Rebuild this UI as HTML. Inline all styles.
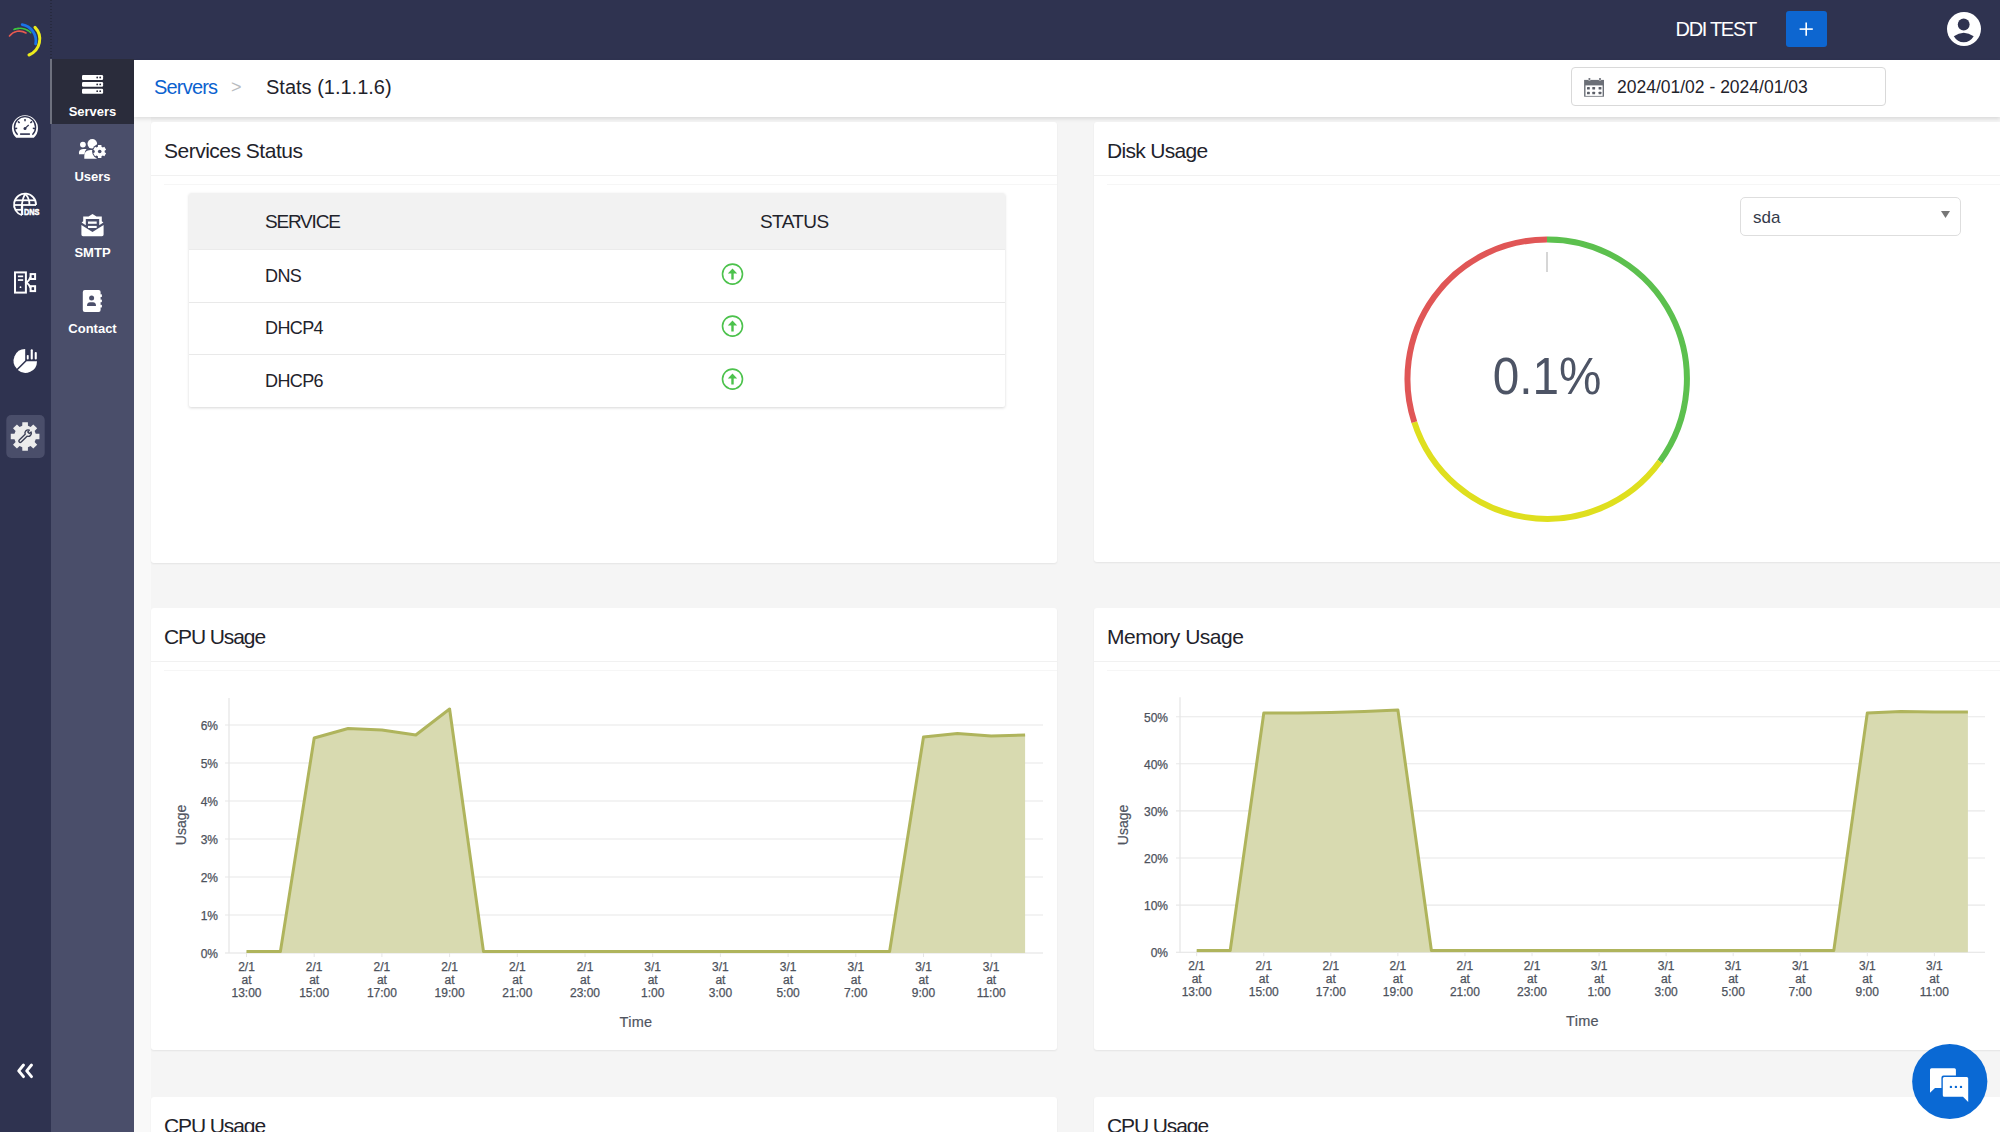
<!DOCTYPE html>
<html><head><meta charset="utf-8">
<style>
*{box-sizing:border-box;margin:0;padding:0}
html,body{width:2000px;height:1132px;overflow:hidden;background:#f9f9f9;font-family:"Liberation Sans",sans-serif;color:#1f232b}
.abs{position:absolute}
#topbar{left:0;top:0;width:2000px;height:60px;background:#2f3350}
#rail{left:0;top:0;width:51px;height:1132px;background:#2f3350}
#side{left:51px;top:60px;width:83px;height:1072px;background:#4a4e6a}
#active{left:51px;top:59px;width:83px;height:65px;background:#2a2c3b}
#activebar{left:50px;top:59px;width:2px;height:65px;background:#6e717e}
.slabel{position:absolute;left:51px;width:83px;text-align:center;color:#fff;font-size:13px;font-weight:700;line-height:15px}
#header{left:134px;top:60px;width:1866px;height:57px;background:#fff;box-shadow:0 2px 4px rgba(0,0,0,.11)}
.card{position:absolute;background:#fff;border-radius:3px;box-shadow:0 1px 2px rgba(0,0,0,.07)}
.ctitle{position:absolute;left:13px;top:16.5px;font-size:21px;color:#1f232b;line-height:24px;letter-spacing:-0.5px;white-space:nowrap}
.csep{position:absolute;left:0;right:0;top:53px;height:1px;background:#f1f1f1}
.csep::after{content:"";position:absolute;left:13px;right:0;top:8.5px;height:1px;background:#f6f6f6}
.th{font-size:19px;color:#1f232b;line-height:22px;letter-spacing:-1.2px}
.td{font-size:18px;color:#1f232b;line-height:21px;letter-spacing:-0.6px}
</style></head>
<body>
<div id="topbar" class="abs"></div>
<div id="rail" class="abs"></div>
<div id="side" class="abs"></div>
<div id="active" class="abs"></div>
<div id="activebar" class="abs"></div>

<div class="slabel" style="top:104px">Servers</div>
<div class="slabel" style="top:169px">Users</div>
<div class="slabel" style="top:245px">SMTP</div>
<div class="slabel" style="top:321px">Contact</div>

<!-- top bar right -->
<div class="abs" style="left:1675.5px;top:18.2px;font-size:20px;color:#fff;letter-spacing:-1.3px;line-height:22px">DDI TEST</div>
<div class="abs" style="left:1786px;top:11px;width:41px;height:36px;background:#0d66d0;border-radius:3px"></div>
<div class="abs" style="left:1947px;top:12px;width:34px;height:34px;border-radius:50%;background:#fff"></div>

<div class="abs" style="left:151px;top:117px;width:1849px;height:1015px;background:#f5f5f5"></div>
<div id="header" class="abs"></div>
<div class="abs" style="left:154px;top:76px;font-size:20px;letter-spacing:-0.8px;color:#0b62cf;line-height:22px">Servers</div>
<div class="abs" style="left:231px;top:76.5px;font-size:18px;color:#b9bcc0;line-height:20px">&gt;</div>
<div class="abs" style="left:266px;top:76px;font-size:20px;color:#1f232b;line-height:22px">Stats (1.1.1.6)</div>

<div class="abs" style="left:1571px;top:67px;width:315px;height:39px;border:1px solid #d9d9d9;border-radius:4px;background:#fff"></div>
<div class="abs" style="left:1617px;top:77px;font-size:17.5px;color:#1f232b;line-height:20px">2024/01/02 - 2024/01/03</div>

<!-- cards -->
<div class="card" style="left:151px;top:122px;width:906px;height:441px"><div class="ctitle">Services Status</div><div class="csep"></div></div>
<div class="card" style="left:1094px;top:122px;width:910px;height:440px"><div class="ctitle" style="letter-spacing:-0.7px">Disk Usage</div><div class="csep"></div></div>
<div class="card" style="left:151px;top:608px;width:906px;height:442px"><div class="ctitle" style="letter-spacing:-1.1px">CPU Usage</div><div class="csep"></div></div>
<div class="card" style="left:1094px;top:608px;width:910px;height:442px"><div class="ctitle">Memory Usage</div><div class="csep"></div></div>
<div class="card" style="left:151px;top:1097px;width:906px;height:441px"><div class="ctitle" style="letter-spacing:-1.1px">CPU Usage</div><div class="csep"></div></div>
<div class="card" style="left:1094px;top:1097px;width:910px;height:441px"><div class="ctitle" style="letter-spacing:-1.1px">CPU Usage</div><div class="csep"></div></div>

<!-- services table -->
<div class="abs" style="left:189px;top:193px;width:816px;height:214px;background:#fff;box-shadow:0 1px 3px rgba(0,0,0,.16);border-radius:2px"></div>
<div class="abs" style="left:189px;top:193px;width:816px;height:57px;background:#f2f2f2;border-bottom:1px solid #ebebeb;border-radius:2px 2px 0 0"></div>
<div class="abs" style="left:189px;top:302px;width:816px;height:1px;background:#e9e9e9"></div>
<div class="abs" style="left:189px;top:354px;width:816px;height:1px;background:#e9e9e9"></div>
<div class="abs th" style="left:265px;top:211px">SERVICE</div>
<div class="abs th" style="left:760px;top:211px;letter-spacing:-0.6px">STATUS</div>
<div class="abs td" style="left:265px;top:266px">DNS</div>
<div class="abs td" style="left:265px;top:318px">DHCP4</div>
<div class="abs td" style="left:265px;top:371px">DHCP6</div>

<!-- dropdown -->
<div class="abs" style="left:1740px;top:197px;width:221px;height:39px;border:1px solid #dedede;border-radius:5px;background:#fff"></div>
<div class="abs" style="left:1753px;top:207.5px;font-size:17px;color:#343a4a;line-height:20px">sda</div>

<!-- gauge value -->
<div class="abs" style="left:1447px;top:348px;width:200px;text-align:center;font-size:51px;color:#4d5465;line-height:58px;transform:scaleX(0.935);transform-origin:100.4px 0">0.1%</div>

<svg class="abs" style="left:0;top:0" width="2000" height="1132" viewBox="0 0 2000 1132">
<style>
.yl{font-family:"Liberation Sans",sans-serif;font-size:12px;fill:#4d525c;stroke:#4d525c;stroke-width:0.25px}
.xl{font-family:"Liberation Sans",sans-serif;font-size:12px;fill:#4d525c;stroke:#4d525c;stroke-width:0.25px}
.ul{font-family:"Liberation Sans",sans-serif;font-size:14px;fill:#50555f;stroke:#50555f;stroke-width:0.2px}
.tl{font-family:"Liberation Sans",sans-serif;font-size:14.5px;fill:#50555f;stroke:#50555f;stroke-width:0.2px;letter-spacing:0.3px}
</style>
<line x1="225" y1="953" x2="1043" y2="953" stroke="#e2e2e2" stroke-width="1.1"/>
<text x="218" y="957.8" text-anchor="end" class="yl">0%</text>
<line x1="225" y1="915" x2="1043" y2="915" stroke="#e8e8e8" stroke-width="1.1"/>
<text x="218" y="919.8" text-anchor="end" class="yl">1%</text>
<line x1="225" y1="877" x2="1043" y2="877" stroke="#e8e8e8" stroke-width="1.1"/>
<text x="218" y="881.8" text-anchor="end" class="yl">2%</text>
<line x1="225" y1="839" x2="1043" y2="839" stroke="#e8e8e8" stroke-width="1.1"/>
<text x="218" y="843.8" text-anchor="end" class="yl">3%</text>
<line x1="225" y1="801" x2="1043" y2="801" stroke="#e8e8e8" stroke-width="1.1"/>
<text x="218" y="805.8" text-anchor="end" class="yl">4%</text>
<line x1="225" y1="763" x2="1043" y2="763" stroke="#e8e8e8" stroke-width="1.1"/>
<text x="218" y="767.8" text-anchor="end" class="yl">5%</text>
<line x1="225" y1="725" x2="1043" y2="725" stroke="#e8e8e8" stroke-width="1.1"/>
<text x="218" y="729.8" text-anchor="end" class="yl">6%</text>
<line x1="229" y1="698" x2="229" y2="953" stroke="#e6e6e6" stroke-width="1.3"/>
<path d="M246.5,951.6 L280.4,951.6 L314.2,738.0 L348.1,728.5 L381.9,730.0 L415.8,735.0 L449.6,709.0 L483.5,951.6 L517.3,951.6 L551.2,951.6 L585.0,951.6 L618.9,951.6 L652.7,951.6 L686.5,951.6 L720.4,951.6 L754.2,951.6 L788.1,951.6 L822.0,951.6 L855.8,951.6 L889.6,951.6 L923.5,737.0 L957.4,733.5 L991.2,736.0 L1025.1,735.0 L1025.1,953 L246.5,953 Z" fill="#d8dab0"/>
<path d="M246.5,951.6 L280.4,951.6 L314.2,738.0 L348.1,728.5 L381.9,730.0 L415.8,735.0 L449.6,709.0 L483.5,951.6 L517.3,951.6 L551.2,951.6 L585.0,951.6 L618.9,951.6 L652.7,951.6 L686.5,951.6 L720.4,951.6 L754.2,951.6 L788.1,951.6 L822.0,951.6 L855.8,951.6 L889.6,951.6 L923.5,737.0 L957.4,733.5 L991.2,736.0 L1025.1,735.0" fill="none" stroke="#afb45c" stroke-width="3" stroke-linejoin="round"/>
<line x1="246.5" y1="953" x2="246.5" y2="957" stroke="#e6e6e6" stroke-width="1"/>
<text x="246.5" y="970.9" text-anchor="middle" class="xl"><tspan x="246.5" dy="0">2/1</tspan><tspan x="246.5" dy="12.8">at</tspan><tspan x="246.5" dy="12.8">13:00</tspan></text>
<line x1="314.2" y1="953" x2="314.2" y2="957" stroke="#e6e6e6" stroke-width="1"/>
<text x="314.2" y="970.9" text-anchor="middle" class="xl"><tspan x="314.2" dy="0">2/1</tspan><tspan x="314.2" dy="12.8">at</tspan><tspan x="314.2" dy="12.8">15:00</tspan></text>
<line x1="381.9" y1="953" x2="381.9" y2="957" stroke="#e6e6e6" stroke-width="1"/>
<text x="381.9" y="970.9" text-anchor="middle" class="xl"><tspan x="381.9" dy="0">2/1</tspan><tspan x="381.9" dy="12.8">at</tspan><tspan x="381.9" dy="12.8">17:00</tspan></text>
<line x1="449.6" y1="953" x2="449.6" y2="957" stroke="#e6e6e6" stroke-width="1"/>
<text x="449.6" y="970.9" text-anchor="middle" class="xl"><tspan x="449.6" dy="0">2/1</tspan><tspan x="449.6" dy="12.8">at</tspan><tspan x="449.6" dy="12.8">19:00</tspan></text>
<line x1="517.3" y1="953" x2="517.3" y2="957" stroke="#e6e6e6" stroke-width="1"/>
<text x="517.3" y="970.9" text-anchor="middle" class="xl"><tspan x="517.3" dy="0">2/1</tspan><tspan x="517.3" dy="12.8">at</tspan><tspan x="517.3" dy="12.8">21:00</tspan></text>
<line x1="585.0" y1="953" x2="585.0" y2="957" stroke="#e6e6e6" stroke-width="1"/>
<text x="585.0" y="970.9" text-anchor="middle" class="xl"><tspan x="585.0" dy="0">2/1</tspan><tspan x="585.0" dy="12.8">at</tspan><tspan x="585.0" dy="12.8">23:00</tspan></text>
<line x1="652.7" y1="953" x2="652.7" y2="957" stroke="#e6e6e6" stroke-width="1"/>
<text x="652.7" y="970.9" text-anchor="middle" class="xl"><tspan x="652.7" dy="0">3/1</tspan><tspan x="652.7" dy="12.8">at</tspan><tspan x="652.7" dy="12.8">1:00</tspan></text>
<line x1="720.4000000000001" y1="953" x2="720.4000000000001" y2="957" stroke="#e6e6e6" stroke-width="1"/>
<text x="720.4000000000001" y="970.9" text-anchor="middle" class="xl"><tspan x="720.4000000000001" dy="0">3/1</tspan><tspan x="720.4000000000001" dy="12.8">at</tspan><tspan x="720.4000000000001" dy="12.8">3:00</tspan></text>
<line x1="788.1" y1="953" x2="788.1" y2="957" stroke="#e6e6e6" stroke-width="1"/>
<text x="788.1" y="970.9" text-anchor="middle" class="xl"><tspan x="788.1" dy="0">3/1</tspan><tspan x="788.1" dy="12.8">at</tspan><tspan x="788.1" dy="12.8">5:00</tspan></text>
<line x1="855.8000000000001" y1="953" x2="855.8000000000001" y2="957" stroke="#e6e6e6" stroke-width="1"/>
<text x="855.8000000000001" y="970.9" text-anchor="middle" class="xl"><tspan x="855.8000000000001" dy="0">3/1</tspan><tspan x="855.8000000000001" dy="12.8">at</tspan><tspan x="855.8000000000001" dy="12.8">7:00</tspan></text>
<line x1="923.5" y1="953" x2="923.5" y2="957" stroke="#e6e6e6" stroke-width="1"/>
<text x="923.5" y="970.9" text-anchor="middle" class="xl"><tspan x="923.5" dy="0">3/1</tspan><tspan x="923.5" dy="12.8">at</tspan><tspan x="923.5" dy="12.8">9:00</tspan></text>
<line x1="991.2" y1="953" x2="991.2" y2="957" stroke="#e6e6e6" stroke-width="1"/>
<text x="991.2" y="970.9" text-anchor="middle" class="xl"><tspan x="991.2" dy="0">3/1</tspan><tspan x="991.2" dy="12.8">at</tspan><tspan x="991.2" dy="12.8">11:00</tspan></text>
<text x="185.5" y="825" transform="rotate(-90 185.5 825)" text-anchor="middle" class="ul">Usage</text>
<text x="636" y="1027.3" text-anchor="middle" class="tl">Time</text>
<line x1="1176" y1="952.2" x2="1985" y2="952.2" stroke="#e2e2e2" stroke-width="1.1"/>
<text x="1168" y="957.0" text-anchor="end" class="yl">0%</text>
<line x1="1176" y1="905.1" x2="1985" y2="905.1" stroke="#e8e8e8" stroke-width="1.1"/>
<text x="1168" y="909.9" text-anchor="end" class="yl">10%</text>
<line x1="1176" y1="858.0" x2="1985" y2="858.0" stroke="#e8e8e8" stroke-width="1.1"/>
<text x="1168" y="862.8" text-anchor="end" class="yl">20%</text>
<line x1="1176" y1="810.9000000000001" x2="1985" y2="810.9000000000001" stroke="#e8e8e8" stroke-width="1.1"/>
<text x="1168" y="815.7" text-anchor="end" class="yl">30%</text>
<line x1="1176" y1="763.8000000000001" x2="1985" y2="763.8000000000001" stroke="#e8e8e8" stroke-width="1.1"/>
<text x="1168" y="768.6" text-anchor="end" class="yl">40%</text>
<line x1="1176" y1="716.7" x2="1985" y2="716.7" stroke="#e8e8e8" stroke-width="1.1"/>
<text x="1168" y="721.5" text-anchor="end" class="yl">50%</text>
<line x1="1180" y1="697.2" x2="1180" y2="952.2" stroke="#e6e6e6" stroke-width="1.3"/>
<path d="M1196.7,950.5 L1230.2,950.5 L1263.8,713.0 L1297.3,713.0 L1330.8,712.5 L1364.4,711.5 L1397.9,710.0 L1431.4,950.5 L1464.9,950.5 L1498.5,950.5 L1532.0,950.5 L1565.5,950.5 L1599.1,950.5 L1632.6,950.5 L1666.1,950.5 L1699.7,950.5 L1733.2,950.5 L1766.7,950.5 L1800.2,950.5 L1833.8,950.5 L1867.3,713.0 L1900.8,711.5 L1934.4,712.0 L1967.9,712.0 L1967.9,952.2 L1196.7,952.2 Z" fill="#d8dab0"/>
<path d="M1196.7,950.5 L1230.2,950.5 L1263.8,713.0 L1297.3,713.0 L1330.8,712.5 L1364.4,711.5 L1397.9,710.0 L1431.4,950.5 L1464.9,950.5 L1498.5,950.5 L1532.0,950.5 L1565.5,950.5 L1599.1,950.5 L1632.6,950.5 L1666.1,950.5 L1699.7,950.5 L1733.2,950.5 L1766.7,950.5 L1800.2,950.5 L1833.8,950.5 L1867.3,713.0 L1900.8,711.5 L1934.4,712.0 L1967.9,712.0" fill="none" stroke="#afb45c" stroke-width="3" stroke-linejoin="round"/>
<line x1="1196.7" y1="952.2" x2="1196.7" y2="956.2" stroke="#e6e6e6" stroke-width="1"/>
<text x="1196.7" y="970.4" text-anchor="middle" class="xl"><tspan x="1196.7" dy="0">2/1</tspan><tspan x="1196.7" dy="12.8">at</tspan><tspan x="1196.7" dy="12.8">13:00</tspan></text>
<line x1="1263.76" y1="952.2" x2="1263.76" y2="956.2" stroke="#e6e6e6" stroke-width="1"/>
<text x="1263.76" y="970.4" text-anchor="middle" class="xl"><tspan x="1263.76" dy="0">2/1</tspan><tspan x="1263.76" dy="12.8">at</tspan><tspan x="1263.76" dy="12.8">15:00</tspan></text>
<line x1="1330.8200000000002" y1="952.2" x2="1330.8200000000002" y2="956.2" stroke="#e6e6e6" stroke-width="1"/>
<text x="1330.8200000000002" y="970.4" text-anchor="middle" class="xl"><tspan x="1330.8200000000002" dy="0">2/1</tspan><tspan x="1330.8200000000002" dy="12.8">at</tspan><tspan x="1330.8200000000002" dy="12.8">17:00</tspan></text>
<line x1="1397.88" y1="952.2" x2="1397.88" y2="956.2" stroke="#e6e6e6" stroke-width="1"/>
<text x="1397.88" y="970.4" text-anchor="middle" class="xl"><tspan x="1397.88" dy="0">2/1</tspan><tspan x="1397.88" dy="12.8">at</tspan><tspan x="1397.88" dy="12.8">19:00</tspan></text>
<line x1="1464.94" y1="952.2" x2="1464.94" y2="956.2" stroke="#e6e6e6" stroke-width="1"/>
<text x="1464.94" y="970.4" text-anchor="middle" class="xl"><tspan x="1464.94" dy="0">2/1</tspan><tspan x="1464.94" dy="12.8">at</tspan><tspan x="1464.94" dy="12.8">21:00</tspan></text>
<line x1="1532.0" y1="952.2" x2="1532.0" y2="956.2" stroke="#e6e6e6" stroke-width="1"/>
<text x="1532.0" y="970.4" text-anchor="middle" class="xl"><tspan x="1532.0" dy="0">2/1</tspan><tspan x="1532.0" dy="12.8">at</tspan><tspan x="1532.0" dy="12.8">23:00</tspan></text>
<line x1="1599.06" y1="952.2" x2="1599.06" y2="956.2" stroke="#e6e6e6" stroke-width="1"/>
<text x="1599.06" y="970.4" text-anchor="middle" class="xl"><tspan x="1599.06" dy="0">3/1</tspan><tspan x="1599.06" dy="12.8">at</tspan><tspan x="1599.06" dy="12.8">1:00</tspan></text>
<line x1="1666.1200000000001" y1="952.2" x2="1666.1200000000001" y2="956.2" stroke="#e6e6e6" stroke-width="1"/>
<text x="1666.1200000000001" y="970.4" text-anchor="middle" class="xl"><tspan x="1666.1200000000001" dy="0">3/1</tspan><tspan x="1666.1200000000001" dy="12.8">at</tspan><tspan x="1666.1200000000001" dy="12.8">3:00</tspan></text>
<line x1="1733.18" y1="952.2" x2="1733.18" y2="956.2" stroke="#e6e6e6" stroke-width="1"/>
<text x="1733.18" y="970.4" text-anchor="middle" class="xl"><tspan x="1733.18" dy="0">3/1</tspan><tspan x="1733.18" dy="12.8">at</tspan><tspan x="1733.18" dy="12.8">5:00</tspan></text>
<line x1="1800.24" y1="952.2" x2="1800.24" y2="956.2" stroke="#e6e6e6" stroke-width="1"/>
<text x="1800.24" y="970.4" text-anchor="middle" class="xl"><tspan x="1800.24" dy="0">3/1</tspan><tspan x="1800.24" dy="12.8">at</tspan><tspan x="1800.24" dy="12.8">7:00</tspan></text>
<line x1="1867.3000000000002" y1="952.2" x2="1867.3000000000002" y2="956.2" stroke="#e6e6e6" stroke-width="1"/>
<text x="1867.3000000000002" y="970.4" text-anchor="middle" class="xl"><tspan x="1867.3000000000002" dy="0">3/1</tspan><tspan x="1867.3000000000002" dy="12.8">at</tspan><tspan x="1867.3000000000002" dy="12.8">9:00</tspan></text>
<line x1="1934.3600000000001" y1="952.2" x2="1934.3600000000001" y2="956.2" stroke="#e6e6e6" stroke-width="1"/>
<text x="1934.3600000000001" y="970.4" text-anchor="middle" class="xl"><tspan x="1934.3600000000001" dy="0">3/1</tspan><tspan x="1934.3600000000001" dy="12.8">at</tspan><tspan x="1934.3600000000001" dy="12.8">11:00</tspan></text>
<text x="1127.5" y="825" transform="rotate(-90 1127.5 825)" text-anchor="middle" class="ul">Usage</text>
<text x="1582.5" y="1026" text-anchor="middle" class="tl">Time</text>
<!-- gauge -->
<g fill="none" stroke-width="6">
<path d="M1547,239.5 A139.5,139.5 0 0 1 1659.9,461.5" stroke="#5cc04e"/>
<path d="M1659.9,461.5 A139.5,139.5 0 0 1 1414.3,422.1" stroke="#dfdf1e"/>
<path d="M1414.3,422.1 A139.5,139.5 0 0 1 1547,239.5" stroke="#e05656"/>
</g>
<line x1="1547" y1="252" x2="1547" y2="272" stroke="#c8c8c8" stroke-width="1.5"/>
<!-- dropdown arrow -->
<path d="M1941,211 L1950,211 L1945.5,218 Z" fill="#777"/>
<!-- status icons -->
<g id="st">
<circle cx="732.5" cy="274.1" r="10" fill="none" stroke="#4cc24c" stroke-width="1.6"/>
<path d="M732.5,268.6 L737.2,273.6 L733.7,273.6 L733.7,279.6 L731.3,279.6 L731.3,273.6 L727.8,273.6 Z" fill="#4cc24c"/>
</g>
<use href="#st" y="52"/>
<use href="#st" y="105"/>

<!-- ===== left rail icons ===== -->
<!-- logo -->
<g fill="none" stroke-linecap="round">
<path d="M9.5,36 A12.5,12.5 0 0 1 26,33" stroke="#e85a50" stroke-width="1.6"/>
<path d="M14,29.5 A15.5,15.5 0 0 1 31.5,33.5" stroke="#3ec83e" stroke-width="1.6" stroke-dasharray="2 1.2"/>
<path d="M22.2,24.6 A16.5,16.5 0 0 1 35.6,44" stroke="#1a74e8" stroke-width="2.8"/>
<path d="M35,27.4 A17,17 0 0 1 29,55" stroke="#ecec1c" stroke-width="3"/>
</g>
<!-- dotted separator near rail -->
<line x1="51" y1="0" x2="51" y2="59" stroke="#20222f" stroke-width="1" stroke-dasharray="1 2"/>
<!-- gauge -->
<path d="M16.2,137.8 L33.8,137.8 A13,13 0 1 0 16.2,137.8 Z" fill="#fff"/>
<path d="M17.6,134.8 A10.6,10.6 0 1 1 32.4,134.8" fill="none" stroke="#2f3350" stroke-width="1.4"/>
<g stroke="#2f3350" stroke-width="1.5">
<line x1="25" y1="119" x2="25" y2="121.2"/>
<line x1="14.6" y1="128.4" x2="17.2" y2="128.4"/>
<line x1="32.8" y1="128.4" x2="35.4" y2="128.4"/>
<line x1="18" y1="121.4" x2="19.6" y2="123"/>
<line x1="32" y1="121.4" x2="30.4" y2="123"/>
<line x1="20.1" y1="134.1" x2="29.9" y2="134.1" stroke-width="1.6"/>
<line x1="25" y1="128.4" x2="28.7" y2="125" stroke-width="1.2"/>
</g>
<circle cx="25" cy="128.4" r="1.5" fill="#2f3350"/>
<!-- DNS globe -->
<g fill="none" stroke="#fff" stroke-width="1.8">
<path d="M22,215.2 A11,11 0 1 1 36,205"/>
<line x1="15" y1="200.3" x2="35" y2="200.3"/>
<line x1="14" y1="205" x2="36" y2="205"/>
<line x1="15.5" y1="209.8" x2="22" y2="209.8"/>
<path d="M25,193.8 Q20.3,203 22.3,215"/>
<path d="M25,193.8 Q29.7,198 29.4,205"/>
<line x1="22.3" y1="205" x2="22.3" y2="215"/>
</g>
<text x="24" y="215" font-family="Liberation Sans" font-weight="700" font-size="9.8" fill="#fff" stroke="#fff" stroke-width="0.6" textLength="15.5" lengthAdjust="spacingAndGlyphs">DNS</text>
<!-- network -->
<g fill="none" stroke="#fff" stroke-width="2">
<rect x="15" y="272.4" width="10.9" height="20.2"/>
<rect x="30.6" y="274.1" width="4.5" height="4.9"/>
<rect x="30.6" y="286.2" width="4.5" height="4.9"/>
<path d="M30.6,277 Q29,281 26.5,282.5 Q29,284 30.6,288"/>
</g>
<g fill="#fff">
<rect x="17.9" y="275.5" width="5.3" height="1.7"/>
<rect x="17.9" y="279.2" width="5.3" height="1.7"/>
<circle cx="20.5" cy="287.2" r="0.9"/>
</g>
<!-- pie chart -->
<g fill="#fff">
<path d="M25.2,349 L25.2,360.5 L16.9,368.8 A11.7,11.7 0 0 1 25.2,349 Z"/>
<path d="M26.6,361.2 L37,361.2 A11.6,11.6 0 0 1 17.8,370 Z"/>
<rect x="26.8" y="354.9" width="1.9" height="4.5" rx="0.9"/>
<rect x="30.7" y="349.2" width="2.1" height="10.2" rx="1"/>
<rect x="34.7" y="352" width="2.1" height="7.4" rx="1"/>
</g>
<!-- settings active -->
<rect x="6.3" y="415" width="38.4" height="43" rx="5" fill="#4a4e6a"/>
<path d="M22.25,425.87 L22.31,422.17 L27.89,422.17 L27.95,425.87 L30.60,426.97 L33.26,424.40 L37.20,428.34 L34.63,431.00 L35.73,433.65 L39.43,433.71 L39.43,439.29 L35.73,439.35 L34.63,442.00 L37.20,444.66 L33.26,448.60 L30.60,446.03 L27.95,447.13 L27.89,450.83 L22.31,450.83 L22.25,447.13 L19.60,446.03 L16.94,448.60 L13.00,444.66 L15.57,442.00 L14.47,439.35 L10.77,439.29 L10.77,433.71 L14.47,433.65 L15.57,431.00 L13.00,428.34 L16.94,424.40 L19.60,426.97 Z" fill="#ececec"/>
<path transform="translate(24.9,436.4) rotate(-45)" d="M-6.6,-1.35 L1.70,-1.35 A3.2,3.2 0 0 1 7.52,-1.30 L5.20,-1.1 L5.20,1.1 L7.52,1.30 A3.2,3.2 0 0 1 1.70,1.35 L-6.6,1.35 A1.35,1.35 0 0 1 -6.6,-1.35 Z" fill="#ececec" stroke="#3b3f55" stroke-width="1.4" stroke-linejoin="round"/>
<!-- collapse -->
<g fill="none" stroke="#fff" stroke-width="2.9" stroke-linecap="round" stroke-linejoin="round">
<path d="M23.5,1065 L18.7,1070.8 L23.5,1076.6"/>
<path d="M31.5,1065 L26.7,1070.8 L31.5,1076.6"/>
</g>

<!-- ===== secondary sidebar icons ===== -->
<!-- servers -->
<g fill="#fff">
<rect x="82" y="75" width="21.1" height="5" rx="1.2"/>
<rect x="82" y="82" width="21.1" height="4.8" rx="1.2"/>
<rect x="82" y="88.7" width="21.1" height="5" rx="1.2"/>
</g>
<g fill="#2a2c3b">
<circle cx="97.2" cy="77.5" r="0.9"/><circle cx="100.2" cy="77.5" r="0.9"/>
<circle cx="97.2" cy="84.4" r="0.9"/><circle cx="100.2" cy="84.4" r="0.9"/>
<circle cx="97.2" cy="91.2" r="0.9"/><circle cx="100.2" cy="91.2" r="0.9"/>
</g>
<!-- users cog -->
<g fill="#fff">
<circle cx="82.9" cy="144.6" r="2.9"/>
<path d="M79,154.2 Q78.2,149.3 83,149.1 L86.6,149.1 Q84.6,151 84.4,154.2 Z"/>
<circle cx="92.3" cy="143.8" r="4.8"/>
<path d="M84.3,158.7 L96.8,158.7 L96.8,150.5 Q94,149.8 90.5,149.9 Q84.5,150 84.3,155.5 Z"/>
</g>
<circle cx="99.7" cy="151.5" r="7.6" fill="#4a4e6a"/>
<path d="M97.91,146.83 L97.99,145.12 L101.41,145.12 L101.49,146.83 L102.85,147.61 L104.37,146.83 L106.08,149.79 L104.64,150.72 L104.64,152.28 L106.08,153.21 L104.37,156.17 L102.85,155.39 L101.49,156.17 L101.41,157.88 L97.99,157.88 L97.91,156.17 L96.55,155.39 L95.03,156.17 L93.32,153.21 L94.76,152.28 L94.76,150.72 L93.32,149.79 L95.03,146.83 L96.55,147.61 Z" fill="#fff"/>
<circle cx="99.7" cy="151.5" r="1.8" fill="#4a4e6a"/>
<!-- smtp -->
<g fill="#fff">
<path d="M81.4,225.1 L92.5,231.9 L103.6,225.1 L103.6,234.6 Q103.6,236.2 102,236.2 L83,236.2 Q81.4,236.2 81.4,234.6 Z"/>
<path d="M81.6,222.6 L83.2,221.2 L83.2,216.4 L88.5,216.4 L92.5,214 L96.5,216.4 L101.8,216.4 L101.8,221.2 L103.4,222.6 L99.2,225.3 L99.2,219.1 L85.8,219.1 L85.8,225.3 Z"/>
<rect x="88" y="221.5" width="8.7" height="2.3"/>
<rect x="88" y="225.9" width="8.7" height="2.1"/>
</g>
<!-- contact -->
<g fill="#fff">
<rect x="82.8" y="289.9" width="17.8" height="22" rx="2"/>
<rect x="100" y="294.2" width="1.9" height="2.8" rx="0.6"/>
<rect x="100" y="299.4" width="1.9" height="2.8" rx="0.6"/>
<rect x="100" y="304.8" width="1.9" height="2.8" rx="0.6"/>
</g>
<circle cx="91.6" cy="298.1" r="2.5" fill="#4a4e6a"/>
<path d="M87,305.9 L96,305.9 Q96,302.3 93,302.3 L90,302.3 Q87,302.3 87,305.9 Z" fill="#4a4e6a"/>

<!-- ===== topbar right ===== -->
<g stroke="#fff" stroke-width="1.6">
<line x1="1799.6" y1="29.1" x2="1812.8" y2="29.1"/>
<line x1="1806.2" y1="22.5" x2="1806.2" y2="35.7"/>
</g>
<circle cx="1963.7" cy="24.5" r="5.9" fill="#2f3350"/>
<path d="M1953.8,36.2 Q1963.7,29.2 1973.7,36.2 Q1970,42.3 1963.7,42.3 Q1957.4,42.3 1953.8,36.2 Z" fill="#2f3350"/>

<!-- calendar -->
<g>
<rect x="1584.1" y="79.9" width="19.9" height="16.8" fill="#6b6f77"/>
<rect x="1585.5" y="85.4" width="17.1" height="10.5" fill="#fff"/>
<circle cx="1589.4" cy="79" r="1.6" fill="#fff"/><circle cx="1589.4" cy="79" r="1.1" fill="#6b6f77"/>
<circle cx="1600" cy="79" r="1.6" fill="#fff"/><circle cx="1600" cy="79" r="1.1" fill="#6b6f77"/>
<g fill="#5b5f68">
<rect x="1587" y="87" width="2.8" height="2.6" rx="0.6"/><rect x="1592.3" y="87" width="2.8" height="2.6" rx="0.6"/><rect x="1598.6" y="87" width="2.8" height="2.6" rx="0.6"/>
<rect x="1587" y="91.7" width="2.8" height="2.6" rx="0.6"/><rect x="1592.3" y="91.7" width="2.8" height="2.6" rx="0.6"/><rect x="1598.6" y="91.7" width="2.8" height="2.6" rx="0.6"/>
</g>
</g>

<!-- chat button -->
<circle cx="1949.75" cy="1081.5" r="37.6" fill="#0a69d4"/>
<path d="M1931.5,1068.2 L1954.4,1068.2 Q1955.9,1068.2 1955.9,1069.7 L1955.9,1088.1 L1935,1088.1 L1930,1092.8 L1930,1069.7 Q1930,1068.2 1931.5,1068.2 Z" fill="#fff"/>
<path d="M1943.5,1075.6 L1967.5,1075.6 Q1969.6,1075.6 1969.6,1077.7 L1969.6,1103.5 L1963.5,1098.2 L1943.5,1098.2 Q1941.4,1098.2 1941.4,1096.1 L1941.4,1077.7 Q1941.4,1075.6 1943.5,1075.6 Z" fill="#0a69d4"/>
<path d="M1944.3,1077 L1966.7,1077 Q1968.2,1077 1968.2,1078.5 L1968.2,1102 L1963,1096.8 L1944.3,1096.8 Q1942.8,1096.8 1942.8,1095.3 L1942.8,1078.5 Q1942.8,1077 1944.3,1077 Z" fill="#fff"/>
<g fill="#0a69d4"><circle cx="1950.9" cy="1086.9" r="1.2"/><circle cx="1955.9" cy="1086.9" r="1.2"/><circle cx="1961" cy="1086.9" r="1.2"/></g>
</svg>

</body></html>
